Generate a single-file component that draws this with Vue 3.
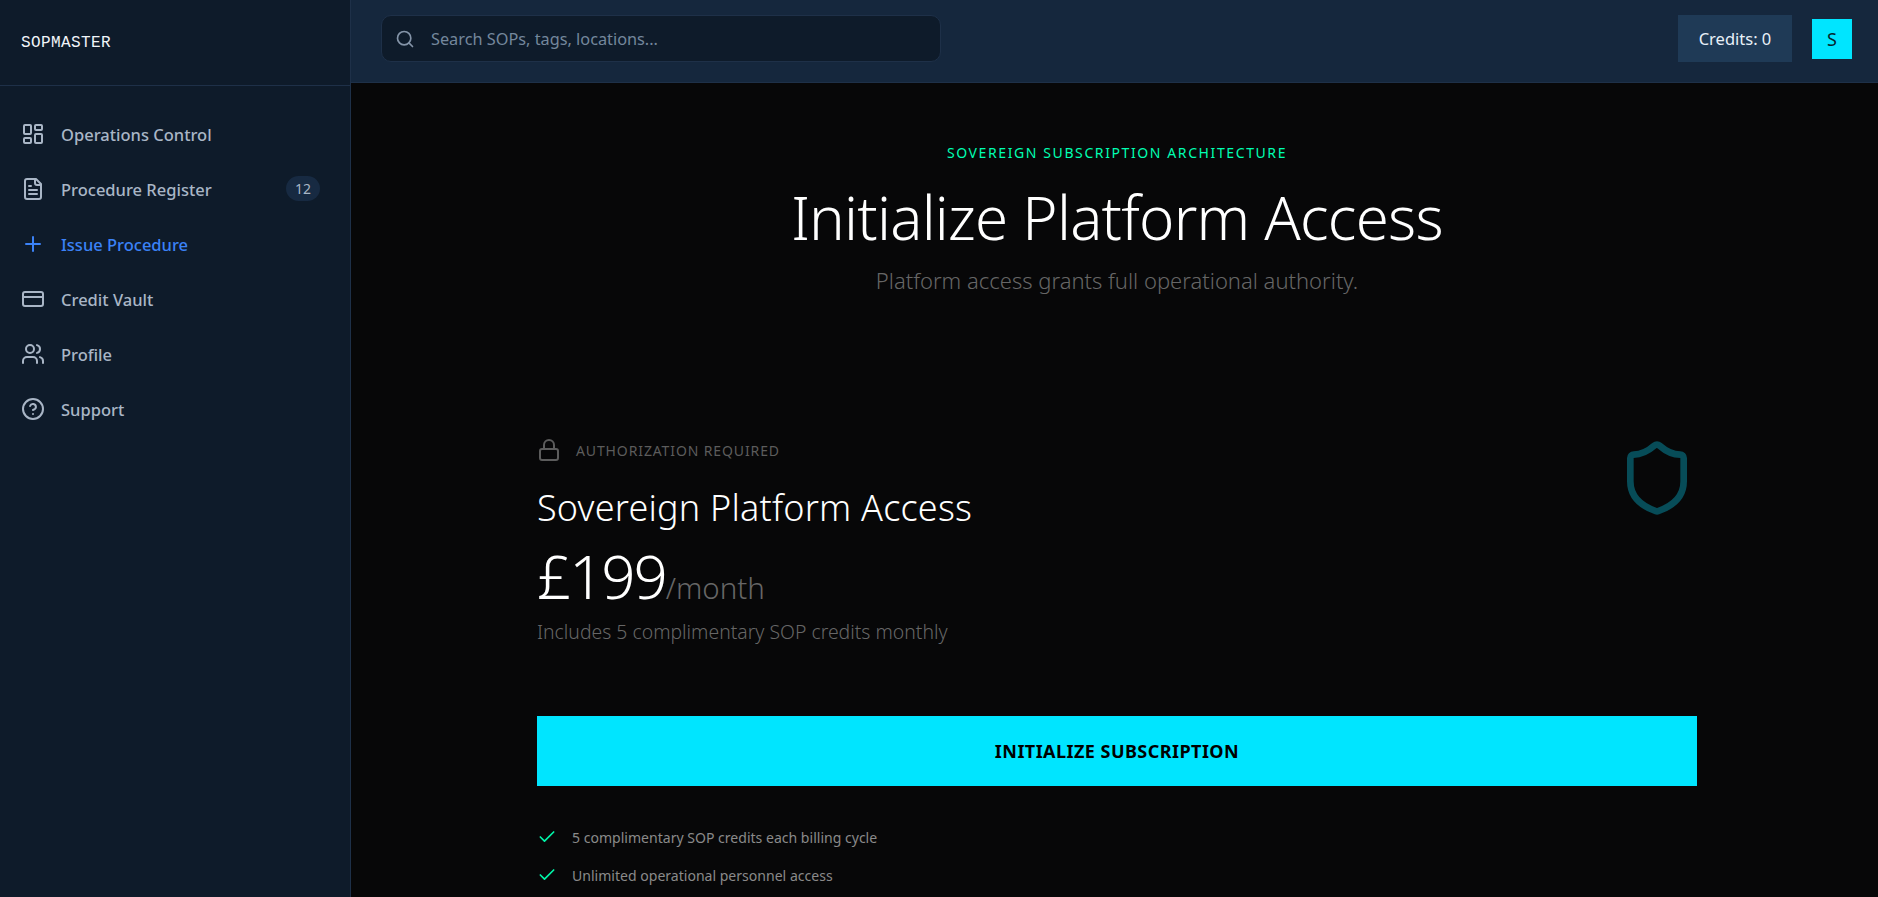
<script setup>
const nav = [
  { label: 'Operations Control', icon: 'grid' },
  { label: 'Procedure Register', icon: 'doc', badge: '12' },
  { label: 'Issue Procedure', icon: 'plus', active: true },
  { label: 'Credit Vault', icon: 'card' },
  { label: 'Profile', icon: 'users' },
  { label: 'Support', icon: 'help' },
]
const features = ['5 complimentary SOP credits each billing cycle', 'Unlimited operational personnel access']
</script>

<template>
  <div class="app">
    <aside class="sidebar">
      <div class="brand"><span>SOPMASTER</span></div>
      <nav class="nav">
        <a v-for="item in nav" :key="item.label" class="nav-item" :class="{ active: item.active }">
          <svg class="nav-icon" viewBox="0 0 24 24" fill="none" stroke="currentColor" stroke-width="2" stroke-linecap="round" stroke-linejoin="round">
            <template v-if="item.icon === 'grid'">
              <rect x="3" y="3" width="7" height="9" rx="1" />
              <rect x="14" y="3" width="7" height="5" rx="1" />
              <rect x="14" y="12" width="7" height="9" rx="1" />
              <rect x="3" y="16" width="7" height="5" rx="1" />
            </template>
            <template v-else-if="item.icon === 'doc'">
              <path d="M15 2H6a2 2 0 0 0-2 2v16a2 2 0 0 0 2 2h12a2 2 0 0 0 2-2V7Z" />
              <path d="M14 2v4a2 2 0 0 0 2 2h4" />
              <path d="M10 9H8" />
              <path d="M16 13H8" />
              <path d="M16 17H8" />
            </template>
            <template v-else-if="item.icon === 'plus'">
              <path d="M5 12h14" />
              <path d="M12 5v14" />
            </template>
            <template v-else-if="item.icon === 'card'">
              <rect x="2" y="5" width="20" height="14" rx="2" />
              <path d="M2 10h20" />
            </template>
            <template v-else-if="item.icon === 'users'">
              <path d="M16 21v-2a4 4 0 0 0-4-4H6a4 4 0 0 0-4 4v2" />
              <circle cx="9" cy="7" r="4" />
              <path d="M22 21v-2a4 4 0 0 0-3-3.870" />
              <path d="M16 3.130a4 4 0 0 1 0 7.750" />
            </template>
            <template v-else>
              <circle cx="12" cy="12" r="10" />
              <path d="M9.090 9a3 3 0 0 1 5.830 1c0 2-3 3-3 3" />
              <path d="M12 17h.01" />
            </template>
          </svg>
          <span class="nav-label">{{ item.label }}</span>
          <span v-if="item.badge" class="badge">{{ item.badge }}</span>
        </a>
      </nav>
    </aside>

    <div class="content">
      <header class="topbar">
        <div class="search">
          <svg class="search-icon" viewBox="0 0 24 24" fill="none" stroke="currentColor" stroke-width="2" stroke-linecap="round" stroke-linejoin="round">
            <circle cx="11" cy="11" r="8" />
            <path d="m21 21-4.300-4.300" />
          </svg>
          <span class="placeholder">Search SOPs, tags, locations...</span>
        </div>
        <div class="top-right">
          <div class="credits">Credits: 0</div>
          <div class="avatar">S</div>
        </div>
      </header>

      <main class="main">
        <section class="hero">
          <div class="eyebrow">SOVEREIGN SUBSCRIPTION ARCHITECTURE</div>
          <h1>Initialize Platform Access</h1>
          <p class="sub">Platform access grants full operational authority.</p>
        </section>

        <section class="plan">
          <svg class="shield" viewBox="0 0 24 24" fill="none" stroke="currentColor" stroke-width="2" stroke-linecap="round" stroke-linejoin="round">
            <path d="M20 13c0 5-3.500 7.500-7.660 8.950a1 1 0 0 1-.67-.01C7.500 20.500 4 18 4 13V6a1 1 0 0 1 1-1c2 0 4.500-1.200 6.240-2.720a1.170 1.170 0 0 1 1.520 0C14.510 3.810 17 5 19 5a1 1 0 0 1 1 1z" />
          </svg>
          <div class="auth">
            <svg class="lock" viewBox="0 0 24 24" fill="none" stroke="currentColor" stroke-width="2" stroke-linecap="round" stroke-linejoin="round">
              <rect x="3" y="11" width="18" height="11" rx="2" />
              <path d="M7 11V7a5 5 0 0 1 10 0v4" />
            </svg>
            <span>AUTHORIZATION REQUIRED</span>
          </div>
          <h2>Sovereign Platform Access</h2>
          <div class="price"><span class="amount">£199</span><span class="per">/month</span></div>
          <p class="includes">Includes 5 complimentary SOP credits monthly</p>
          <button class="cta">INITIALIZE SUBSCRIPTION</button>
          <ul class="features">
            <li v-for="f in features" :key="f">
              <svg class="check" viewBox="0 0 24 24" fill="none" stroke="currentColor" stroke-width="2" stroke-linecap="round" stroke-linejoin="round">
                <path d="M20 6 9 17l-5-5" />
              </svg>
              <span>{{ f }}</span>
            </li>
          </ul>
        </section>
      </main>
    </div>
  </div>
</template>

<style>
html, body { margin: 0; height: 100%; overflow: hidden; background: #070708; }
</style>

<style scoped>
* { box-sizing: border-box; }
.app {
  display: flex;
  height: 897px;
  overflow: hidden;
  font-family: "Noto Sans", "Open Sans", sans-serif;
  background: #070708;
}
.sidebar {
  width: 351px;
  flex: none;
  background: #0e1b2a;
  border-right: 1px solid #1e3048;
}
.brand {
  height: 86px;
  padding: 1px 0 0 21px;
  display: flex;
  align-items: center;
  border-bottom: 1px solid #1e3048;
  color: #f1f5f9;
  font-family: "Liberation Mono", "DejaVu Sans Mono", monospace;
  font-size: 16px;
  letter-spacing: 0.400px;
}
.nav {
  display: flex;
  flex-direction: column;
  padding-top: 20px;
}
.nav-item {
  height: 55px;
  display: flex;
  align-items: center;
  padding: 0 30px 0 21px;
  color: #a9b6c6;
  font-size: 16.5px;
  font-weight: 500;
}
.nav-item.active { color: #3b82f6; }
.nav-icon { width: 24px; height: 24px; flex: none; margin-right: 16px; }
.nav-label { flex: 1; padding-top: 1px; }
.badge {
  width: 34px;
  height: 25px;
  border-radius: 13px;
  background: #172a42;
  color: #a9b6c6;
  font-size: 14px;
  font-weight: 400;
  display: flex;
  align-items: center;
  justify-content: center;
}
.content { flex: 1; min-width: 0; display: flex; flex-direction: column; }
.topbar {
  height: 83px;
  flex: none;
  background: #15273d;
  border-bottom: 1px solid #1e3048;
  display: flex;
  align-items: center;
  justify-content: space-between;
  padding: 0 26px 5px 30px;
}
.search {
  width: 560px;
  height: 47px;
  background: #0e1b2a;
  border: 1px solid #1e3048;
  border-radius: 10px;
  display: flex;
  align-items: center;
  padding-left: 13px;
  color: #8494a8;
}
.search-icon { width: 20px; height: 20px; margin-right: 16px; }
.placeholder { font-size: 16.3px; color: #74879c; }
.top-right { display: flex; align-items: center; gap: 20px; }
.credits {
  width: 114px;
  height: 47px;
  background: #1f3a56;
  color: #e8f0f8;
  font-size: 16.5px;
  display: flex;
  align-items: center;
  justify-content: center;
}
.avatar {
  width: 40px;
  height: 40px;
  background: #00e5ff;
  color: #04282e;
  font-size: 18px;
  display: flex;
  align-items: center;
  justify-content: center;
}
.main { flex: 1; overflow: hidden; padding: 61px 181px 0 186px; }
.hero { text-align: center; }
.eyebrow {
  color: #00ffb2;
  font-size: 14px;
  letter-spacing: 1.600px;
  line-height: 18px;
}
h1 {
  margin: 19px 0 0;
  color: #fff;
  font-size: 60px;
  font-weight: 300;
  line-height: 72px;
  letter-spacing: -0.750px;
}
.sub { margin: 12px 0 0; color: #666; font-size: 22px; font-weight: 300; line-height: 30px; }
.plan { position: relative; margin-top: 143px; }
.shield {
  position: absolute;
  right: 0;
  top: 0;
  width: 80px;
  height: 80px;
  color: #074c58;
}
.auth {
  display: flex;
  align-items: center;
  height: 24px;
  color: #5c5c5c;
  font-size: 14px;
  letter-spacing: 0.880px;
}
.lock { width: 24px; height: 24px; flex: none; margin-right: 15px; }
h2 { margin: 24px 0 0; color: #fff; font-size: 36px; font-weight: 350; line-height: 44px; letter-spacing: 0.200px; }
.price { margin-top: 11px; display: flex; align-items: baseline; }
.amount { color: #fff; font-size: 60px; font-weight: 300; line-height: 70px; letter-spacing: -2.100px; }
.per { color: #666; font-size: 29.500px; font-weight: 300; }
.includes { margin: 8px 0 0; color: #666; font-size: 19.400px; font-weight: 300; line-height: 26px; }
.cta {
  display: block;
  width: 100%;
  height: 70px;
  margin-top: 71px;
  border: none;
  background: #00e5ff;
  color: #000;
  font: inherit;
  font-size: 18px;
  font-weight: 700;
  letter-spacing: 0.450px;
}
.features { list-style: none; margin: 40px 0 0; padding: 0; display: flex; flex-direction: column; gap: 16px; }
.features li {
  display: flex;
  align-items: center;
  height: 22px;
  color: #8a8a8a;
  font-size: 14.050px;
}
.check { width: 20px; height: 20px; flex: none; margin-right: 15px; color: #00f5a8; }
</style>
